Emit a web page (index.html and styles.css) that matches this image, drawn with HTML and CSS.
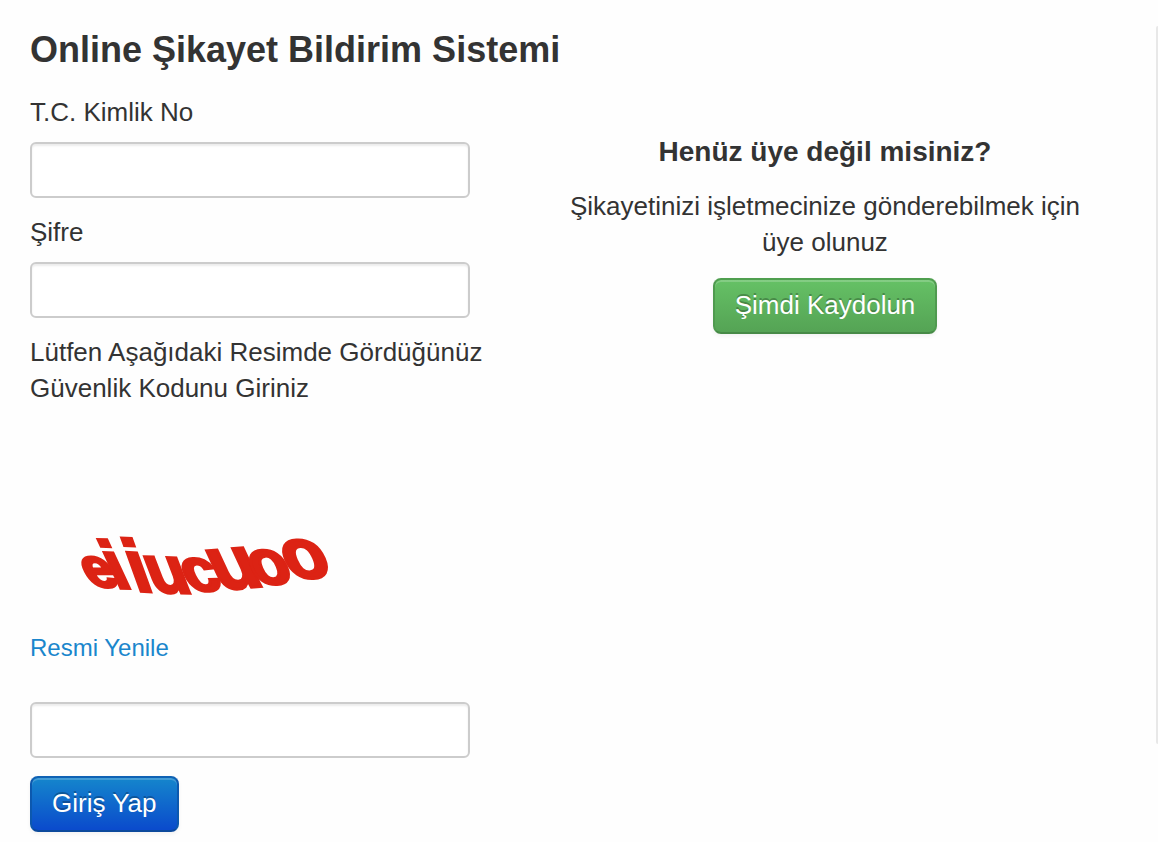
FILE: index.html
```html
<!DOCTYPE html>
<html lang="tr">
<head>
    <meta charset="UTF-8">
    <meta name="viewport" content="width=device-width, initial-scale=1.0">
    <title>Online Şikayet Bildirim Sistemi</title>
    <link rel="stylesheet" href="styles.css">
</head>
<body>

    <div class="page">
        <main class="content">
            <h1>Online Şikayet Bildirim Sistemi</h1>

            <div class="columns">
                <form class="login-form">
                    <label for="tcNo">T.C. Kimlik No</label>
                    <input type="text" id="tcNo">

                    <label for="password">Şifre</label>
                    <input type="password" id="password">

                    <label for="captcha">Lütfen Aşağıdaki Resimde Gördüğünüz Güvenlik Kodunu Giriniz</label>

                    <!-- Security code -->
                    <svg class="captcha" width="400" height="144" viewBox="0 0 400 144" role="img">
                        <g class="captcha-text">
                            <text font-size="56" transform="translate(61 101) skewX(27)">e</text>
                            <text font-size="66" transform="translate(86 102) rotate(2) skewX(27)">i</text>
                            <text font-size="72" transform="translate(106 105) rotate(3) skewX(23)">i</text>
                            <text font-size="66" transform="translate(124 106) rotate(2) skewX(23)">u</text>
                            <text font-size="62" transform="translate(161 106) rotate(-4) skewX(22)">c</text>
                            <text font-size="76" transform="translate(190 104) rotate(-5) skewX(20)">u</text>
                            <text font-size="64" transform="translate(227 99) rotate(-3) skewX(20)">o</text>
                            <text font-size="72" transform="translate(261 93) rotate(-3) skewX(20)">o</text>
                        </g>
                    </svg>

                    <a href="#" class="refresh">Resmi Yenile</a>
                    <input type="text" id="captcha">

                    <button type="submit" class="btn btn-primary">Giriş Yap</button>
                </form>

                <section class="register">
                    <h2>Henüz üye değil misiniz?</h2>
                    <p>Şikayetinizi işletmecinize gönderebilmek için üye olunuz</p>
                    <button type="button" class="btn btn-success">Şimdi Kaydolun</button>
                </section>
            </div>
        </main>

        <div class="side-edge"></div>
    </div>

</body>
</html>
```

FILE: styles.css
```css
* {
    margin: 0;
    padding: 0;
    box-sizing: border-box;
}

body {
    font-family: "Liberation Sans", "Helvetica Neue", Helvetica, Arial, sans-serif;
    font-size: 26px;
    line-height: 36px;
    color: #333;
    background-color: #fefefe;
}

.page {
    display: flex;
}

.content {
    flex: 1;
    padding: 30px 66px 10px 30px;
}

/* Left edge of the neighbouring panel */
.side-edge {
    width: 2px;
    margin-top: 26px;
    margin-bottom: 98px;
    border-radius: 2px 0 0 2px;
    background-color: #e8e8e8;
}

h1 {
    font-size: 36px;
    line-height: 40px;
    margin-bottom: 24px;
}

h2 {
    font-size: 28px;
    line-height: 36px;
    margin-bottom: 18px;
}

.columns {
    display: grid;
    grid-template-columns: 1fr 1fr;
}

.login-form {
    display: flex;
    flex-direction: column;
    align-items: flex-start;
}

label {
    max-width: 500px;
    margin-bottom: 12px;
}

input {
    width: 440px;
    max-width: 100%;
    height: 56px;
    margin-bottom: 16px;
    padding: 8px 12px;
    font: inherit;
    color: #555;
    background-color: #fff;
    border: 2px solid #ccc;
    border-radius: 6px;
    box-shadow: inset 0 2px 2px rgba(0, 0, 0, 0.075);
}

.captcha {
    margin-top: 68px;
    max-width: 100%;
}

.captcha-text {
    fill: #dc2314;
    stroke: #dc2314;
    stroke-width: 3;
    font-weight: bold;
}

.refresh {
    font-size: 24px;
    margin-bottom: 36px;
    color: #1a86cc;
    text-decoration: none;
}

.register {
    padding-top: 40px;
    text-align: center;
}

.register p {
    margin-bottom: 18px;
}

.btn {
    height: 56px;
    padding: 0 20px 2px;
    font: inherit;
    color: #fff;
    border: 2px solid;
    border-radius: 8px;
    text-shadow: 0 -2px 0 rgba(0, 0, 0, 0.25);
    box-shadow: inset 0 2px 0 rgba(255, 255, 255, 0.2), 0 2px 4px rgba(0, 0, 0, 0.05);
    cursor: pointer;
}

.btn-primary {
    margin-top: 2px;
    background: linear-gradient(#1588cc, #0a48cc) border-box;
    border-color: #0f62b4 #0c58ae #0c4a9c;
}

.btn-success {
    background: linear-gradient(#66c266, #54a254) border-box;
    border-color: #4f9f4f #4f9a4f #478a47;
}
```
